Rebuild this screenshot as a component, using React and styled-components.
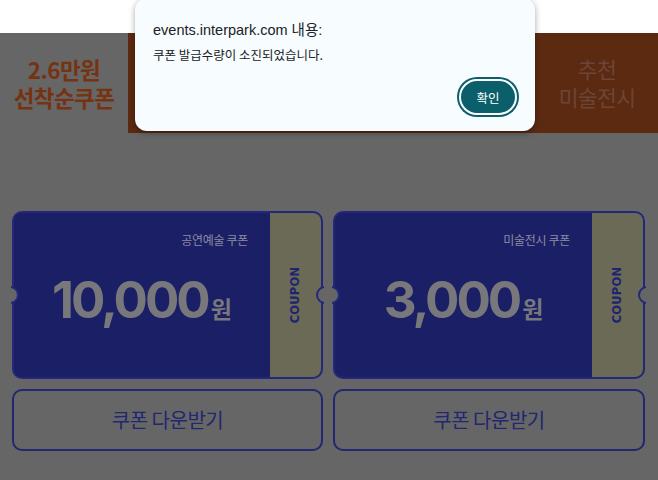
import React from 'react';
import styled, { createGlobalStyle } from 'styled-components';

const GlobalStyle = createGlobalStyle`
  html, body {
    margin: 0;
    padding: 0;
    background: #666666;
  }
  body {
    font-family: "Noto Sans CJK KR", "Noto Sans", sans-serif;
    width: 658px;
    height: 480px;
    overflow: hidden;
  }
`;

const coupons = [
  { label: '공연예술 쿠폰', amount: '10,000' },
  { label: '미술전시 쿠폰', amount: '3,000' },
];

function App() {
  return (
    <Page>
      <GlobalStyle />
      <TopStrip />
      <TabBar>
        <Tab $active $width="128px">
          2.6만원
          <br />
          선착순쿠폰
        </Tab>
        <Tab $width="auto" />
        <Tab $width="122px">
          추천
          <br />
          미술전시
        </Tab>
      </TabBar>

      <CouponGrid>
        {coupons.map((c) => (
          <CouponColumn key={c.label}>
            <Ticket>
              <TicketMain>
                <TicketLabel>{c.label}</TicketLabel>
                <Amount>
                  {c.amount}
                  <Won>원</Won>
                </Amount>
              </TicketMain>
              <Stub>
                <StubText>COUPON</StubText>
              </Stub>
              <Notch $side="left" />
              <Notch $side="right" />
            </Ticket>
            <DownloadButton>쿠폰 다운받기</DownloadButton>
          </CouponColumn>
        ))}
      </CouponGrid>

      {/* browser alert */}
      <Dialog>
        <DialogTitle>events.interpark.com 내용:</DialogTitle>
        <DialogMessage>쿠폰 발급수량이 소진되었습니다.</DialogMessage>
        <DialogActions>
          <OkButton>확인</OkButton>
        </DialogActions>
      </Dialog>
    </Page>
  );
}

const Page = styled.div`
  position: relative;
  width: 658px;
  height: 480px;
  background: #666666;
`;

const TopStrip = styled.div`
  height: 33px;
  background: #ffffff;
`;

const TabBar = styled.div`
  display: flex;
  height: 100px;
  background: #5c2a11;
`;

const Tab = styled.div`
  flex: ${(p) => (p.$width === 'auto' ? '1' : `0 0 ${p.$width}`)};
  display: flex;
  align-items: center;
  justify-content: center;
  text-align: center;
  font-size: ${(p) => (p.$active ? '22.5px' : '21.5px')};
  line-height: 28px;
  letter-spacing: -0.6px;
  font-weight: ${(p) => (p.$active ? 700 : 400)};
  color: ${(p) => (p.$active ? '#763312' : '#6c4536')};
  background: ${(p) => (p.$active ? '#666666' : 'transparent')};
  padding-bottom: 1px;
`;

const CouponGrid = styled.div`
  display: grid;
  grid-template-columns: 311px 312px;
  column-gap: 10px;
  padding: 78px 0 0 12px;
`;

const CouponColumn = styled.div`
  display: flex;
  flex-direction: column;
  gap: 10px;
`;

const Ticket = styled.div`
  position: relative;
  display: flex;
  height: 168px;
  box-sizing: border-box;
  border: 2px solid #23287a;
  border-radius: 10px;
  background: #1b1f66;
`;

const TicketMain = styled.div`
  flex: 1;
  min-width: 0;
  display: flex;
  flex-direction: column;
  padding: 19px 22px 0 0;
`;

const TicketLabel = styled.div`
  align-self: flex-end;
  font-size: 12px;
  line-height: 16px;
  letter-spacing: -0.3px;
  color: #8a8ba0;
`;

const Amount = styled.div`
  align-self: center;
  margin-top: 22px;
  padding-left: 22px;
  font-family: Inter, "Noto Sans", sans-serif;
  font-weight: 700;
  font-size: 51px;
  letter-spacing: -3px;
  line-height: 60px;
  color: #77777c;
`;

const Won = styled.span`
  font-family: "Noto Sans CJK KR", sans-serif;
  font-size: 23px;
  letter-spacing: 0;
  margin-left: 3px;
`;

const Stub = styled.div`
  flex: 0 0 51px;
  min-width: 0;
  display: flex;
  align-items: center;
  justify-content: center;
  overflow: hidden;
  background: #6a6a56;
  border-radius: 0 8px 8px 0;
`;

const StubText = styled.span`
  transform: rotate(-90deg);
  white-space: nowrap;
  font-family: "DejaVu Sans", sans-serif;
  font-weight: 700;
  font-size: 11.5px;
  letter-spacing: 0.2px;
  color: #1f2470;
`;

const Notch = styled.span`
  position: absolute;
  top: 73px;
  ${(p) => (p.$side === 'left' ? 'left: -13px;' : 'right: -13px;')}
  width: 18px;
  height: 18px;
  box-sizing: border-box;
  border-radius: 50%;
  background: #666666;
  border: 2px solid #23287a;
  clip-path: ${(p) => (p.$side === 'left' ? 'inset(0 0 0 10px)' : 'inset(0 10px 0 0)')};
`;

const DownloadButton = styled.button`
  height: 62px;
  box-sizing: border-box;
  border: 2px solid #22276f;
  border-radius: 10px;
  background: transparent;
  font-family: "Noto Sans CJK KR", sans-serif;
  font-size: 20px;
  letter-spacing: -0.5px;
  color: #22276f;
  padding: 0 0 2px;
`;

const Dialog = styled.div`
  position: absolute;
  left: 135px;
  top: -2px;
  width: 400px;
  height: 133px;
  box-sizing: border-box;
  padding: 22px 17px 0 18px;
  background: #f7fcff;
  border-radius: 12px;
  box-shadow: 0 2px 6px rgba(0, 0, 0, 0.35);
  font-family: "Noto Sans CJK KR", "Liberation Sans", sans-serif;
  color: #202124;
`;

const DialogTitle = styled.div`
  font-family: "Liberation Sans", "Noto Sans CJK KR", sans-serif;
  font-size: 14.5px;
  line-height: 20px;
`;

const DialogMessage = styled.div`
  margin-top: 6px;
  font-size: 12.5px;
  line-height: 18px;
`;

const DialogActions = styled.div`
  display: flex;
  justify-content: flex-end;
  margin-top: 15px;
`;

const OkButton = styled.button`
  width: 58px;
  height: 36px;
  margin-right: 1px;
  border-radius: 18px;
  border: 2px solid #ffffff;
  box-shadow: 0 0 0 2px #0b5f6b;
  background: #0b5f6b;
  color: #ffffff;
  font-family: "Noto Sans CJK KR", sans-serif;
  font-size: 12.5px;
  font-weight: 400;
  padding: 0;
`;

export default App;
